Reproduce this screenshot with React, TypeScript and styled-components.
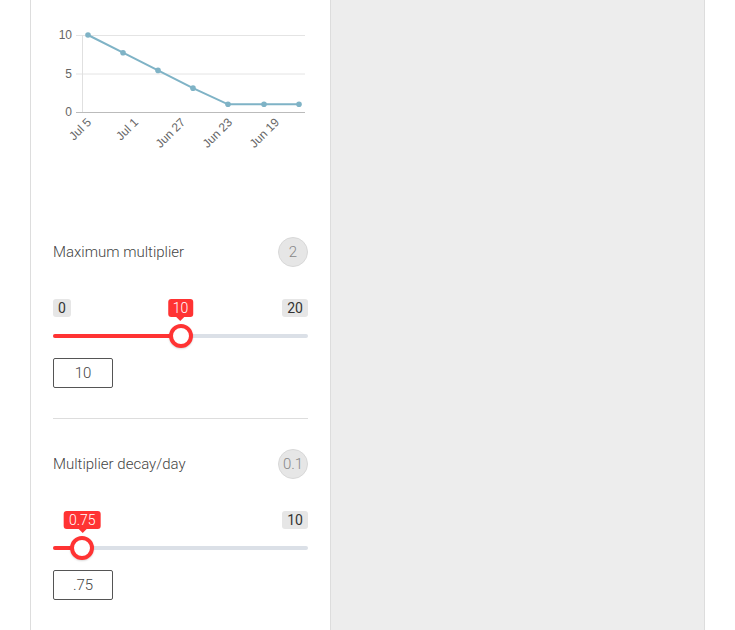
import React from 'react'
import styled, { createGlobalStyle } from 'styled-components'

const GlobalStyle = createGlobalStyle`
  html, body, #root {
    margin: 0;
    height: 100%;
  }
  body {
    overflow: hidden;
    background: #ffffff;
    font-family: Roboto, 'Liberation Sans', sans-serif;
  }
`

const colors = {
  red: '#ff3333',
  track: '#dbe0e7',
  border: '#dddddd',
  line: '#7fb3c6',
}

type Point = { x: number; value: number }

const points: Point[] = [
  { x: 35, value: 10 },
  { x: 70, value: 7.7 },
  { x: 105, value: 5.4 },
  { x: 140, value: 3.1 },
  { x: 175, value: 1 },
  { x: 211, value: 1 },
  { x: 246, value: 1 },
]

const ticks = [
  { x: 35, label: 'Jul 5' },
  { x: 82, label: 'Jul 1' },
  { x: 129, label: 'Jun 27' },
  { x: 176, label: 'Jun 23' },
  { x: 223, label: 'Jun 19' },
]

const yFor = (v: number): number => 112 - v * 7.7

const HistoryChart = () => (
  <ChartBox>
    <svg width={255} height={170}>
      {[0, 5, 10].map((v) => (
        <g key={v}>
          <line x1={23} x2={252} y1={yFor(v) + 0.5} y2={yFor(v) + 0.5} stroke={v === 0 ? '#bbbbbb' : '#e4e4e4'} />
          <text x={19} y={yFor(v) + 4} textAnchor='end' fontSize={12} fill='#666'>
            {v}
          </text>
        </g>
      ))}
      <line x1={29.5} x2={29.5} y1={35} y2={112} stroke='#e0e0e0' />
      <polyline
        points={points.map((p) => `${p.x},${yFor(p.value)}`).join(' ')}
        fill='none'
        stroke={colors.line}
        strokeWidth={2}
      />
      {points.map((p) => (
        <circle key={p.x} cx={p.x} cy={yFor(p.value)} r={2.8} fill={colors.line} />
      ))}
      {ticks.map((t) => (
        <text
          key={t.label}
          x={t.x + 4}
          y={123}
          textAnchor='end'
          fontSize={12}
          fill='#666'
          transform={`rotate(-45 ${t.x + 4} 123)`}
        >
          {t.label}
        </text>
      ))}
    </svg>
  </ChartBox>
)

type SliderProps = {
  min: number
  max: number
  value: number
  display: string
  showMin: boolean
}

const Slider = ({ min, max, value, display, showMin }: SliderProps) => {
  const ratio = (value - min) / (max - min)
  const handleLeft = 12 + ratio * 231
  return (
    <SliderWrap>
      <LimitsRow>
        <LimitBadge style={{ visibility: showMin ? 'visible' : 'hidden' }}>{min}</LimitBadge>
        <LimitBadge>{max}</LimitBadge>
      </LimitsRow>
      <Track>
        <TrackFill style={{ width: handleLeft }} />
      </Track>
      <ValueTip style={{ left: handleLeft }}>{display}</ValueTip>
      <Handle style={{ left: handleLeft }} />
    </SliderWrap>
  )
}

type SettingProps = {
  label: string
  badge: string
  min: number
  max: number
  value: number
  display: string
  inputText: string
  showMin: boolean
}

const Setting = ({ label, badge, min, max, value, display, inputText, showMin }: SettingProps) => (
  <Section>
    <Header>
      <Label>{label}</Label>
      <RoundBadge>{badge}</RoundBadge>
    </Header>
    <Slider min={min} max={max} value={value} display={display} showMin={showMin} />
    <ValueInput defaultValue={inputText} />
  </Section>
)

export default function App() {
  return (
    <>
      <GlobalStyle />
      <Page>
        <LeftPanel>
          <HistoryChart />
          <Setting
            label='Maximum multiplier'
            badge='2'
            min={0}
            max={20}
            value={10}
            display='10'
            inputText='10'
            showMin
          />
          <Setting
            label='Multiplier decay/day'
            badge='0.1'
            min={0}
            max={10}
            value={0.75}
            display='0.75'
            inputText='.75'
            showMin={false}
          />
        </LeftPanel>
        <RightPanel />
      </Page>
    </>
  )
}

const Page = styled.div`
  display: flex;
  height: 100%;
  padding-left: 30px;
`
const LeftPanel = styled.div`
  width: 255px;
  padding: 0 22px;
  border-left: 1px solid ${colors.border};
  background: #ffffff;
`
const RightPanel = styled.div`
  width: 373px;
  background: #ededed;
  border-left: 1px solid ${colors.border};
  border-right: 1px solid ${colors.border};
`
const ChartBox = styled.div`
  height: 207px;
  font-family: 'Liberation Sans', Arial, sans-serif;
  svg {
    display: block;
  }
`
const Section = styled.div`
  padding: 30px 0 30px;
  border-bottom: 1px solid ${colors.border};
`
const Header = styled.div`
  display: flex;
  align-items: center;
  justify-content: space-between;
  height: 30px;
`
const Label = styled.div`
  font-size: 15px;
  font-weight: 300;
  color: #444444;
`
const RoundBadge = styled.div`
  box-sizing: border-box;
  width: 30px;
  height: 30px;
  border-radius: 50%;
  border: 1px solid #d8d8d8;
  background: #e6e6e6;
  display: flex;
  align-items: center;
  justify-content: center;
  font-size: 15px;
  font-weight: 300;
  color: #888888;
`
const SliderWrap = styled.div`
  position: relative;
  margin-top: 32px;
  height: 49px;
`
const LimitsRow = styled.div`
  display: flex;
  justify-content: space-between;
`
const LimitBadge = styled.div`
  height: 18px;
  line-height: 18px;
  padding: 0 5px;
  min-width: 7px;
  text-align: center;
  border-radius: 3px;
  background: #e6e6e6;
  font-size: 14px;
  font-weight: 400;
  color: #333333;
`
const Track = styled.div`
  margin-top: 17px;
  height: 4px;
  border-radius: 2px;
  background: ${colors.track};
  overflow: hidden;
`
const TrackFill = styled.div`
  height: 100%;
  background: ${colors.red};
`
const ValueTip = styled.div`
  position: absolute;
  top: 0;
  transform: translateX(-50%);
  height: 18px;
  line-height: 18px;
  padding: 0 5px;
  border-radius: 3px;
  background: ${colors.red};
  color: #ffffff;
  font-size: 14px;
  font-weight: 300;
  white-space: nowrap;
  &::after {
    content: '';
    position: absolute;
    left: 50%;
    bottom: -4px;
    margin-left: -4px;
    border-left: 4px solid transparent;
    border-right: 4px solid transparent;
    border-top: 4px solid ${colors.red};
  }
`
const Handle = styled.div`
  position: absolute;
  top: 25px;
  box-sizing: border-box;
  width: 24px;
  height: 24px;
  margin-left: -12px;
  border-radius: 50%;
  border: 4px solid ${colors.red};
  background: #ffffff;
  box-shadow: 0 1px 2px rgba(0, 0, 0, 0.15);
`
const ValueInput = styled.input`
  display: block;
  box-sizing: border-box;
  margin-top: 10px;
  width: 60px;
  height: 30px;
  padding: 0;
  border: 1px solid #555555;
  border-radius: 2px;
  text-align: center;
  font-family: Roboto, sans-serif;
  font-size: 15px;
  font-weight: 300;
  color: #444444;
  outline: none;
`
